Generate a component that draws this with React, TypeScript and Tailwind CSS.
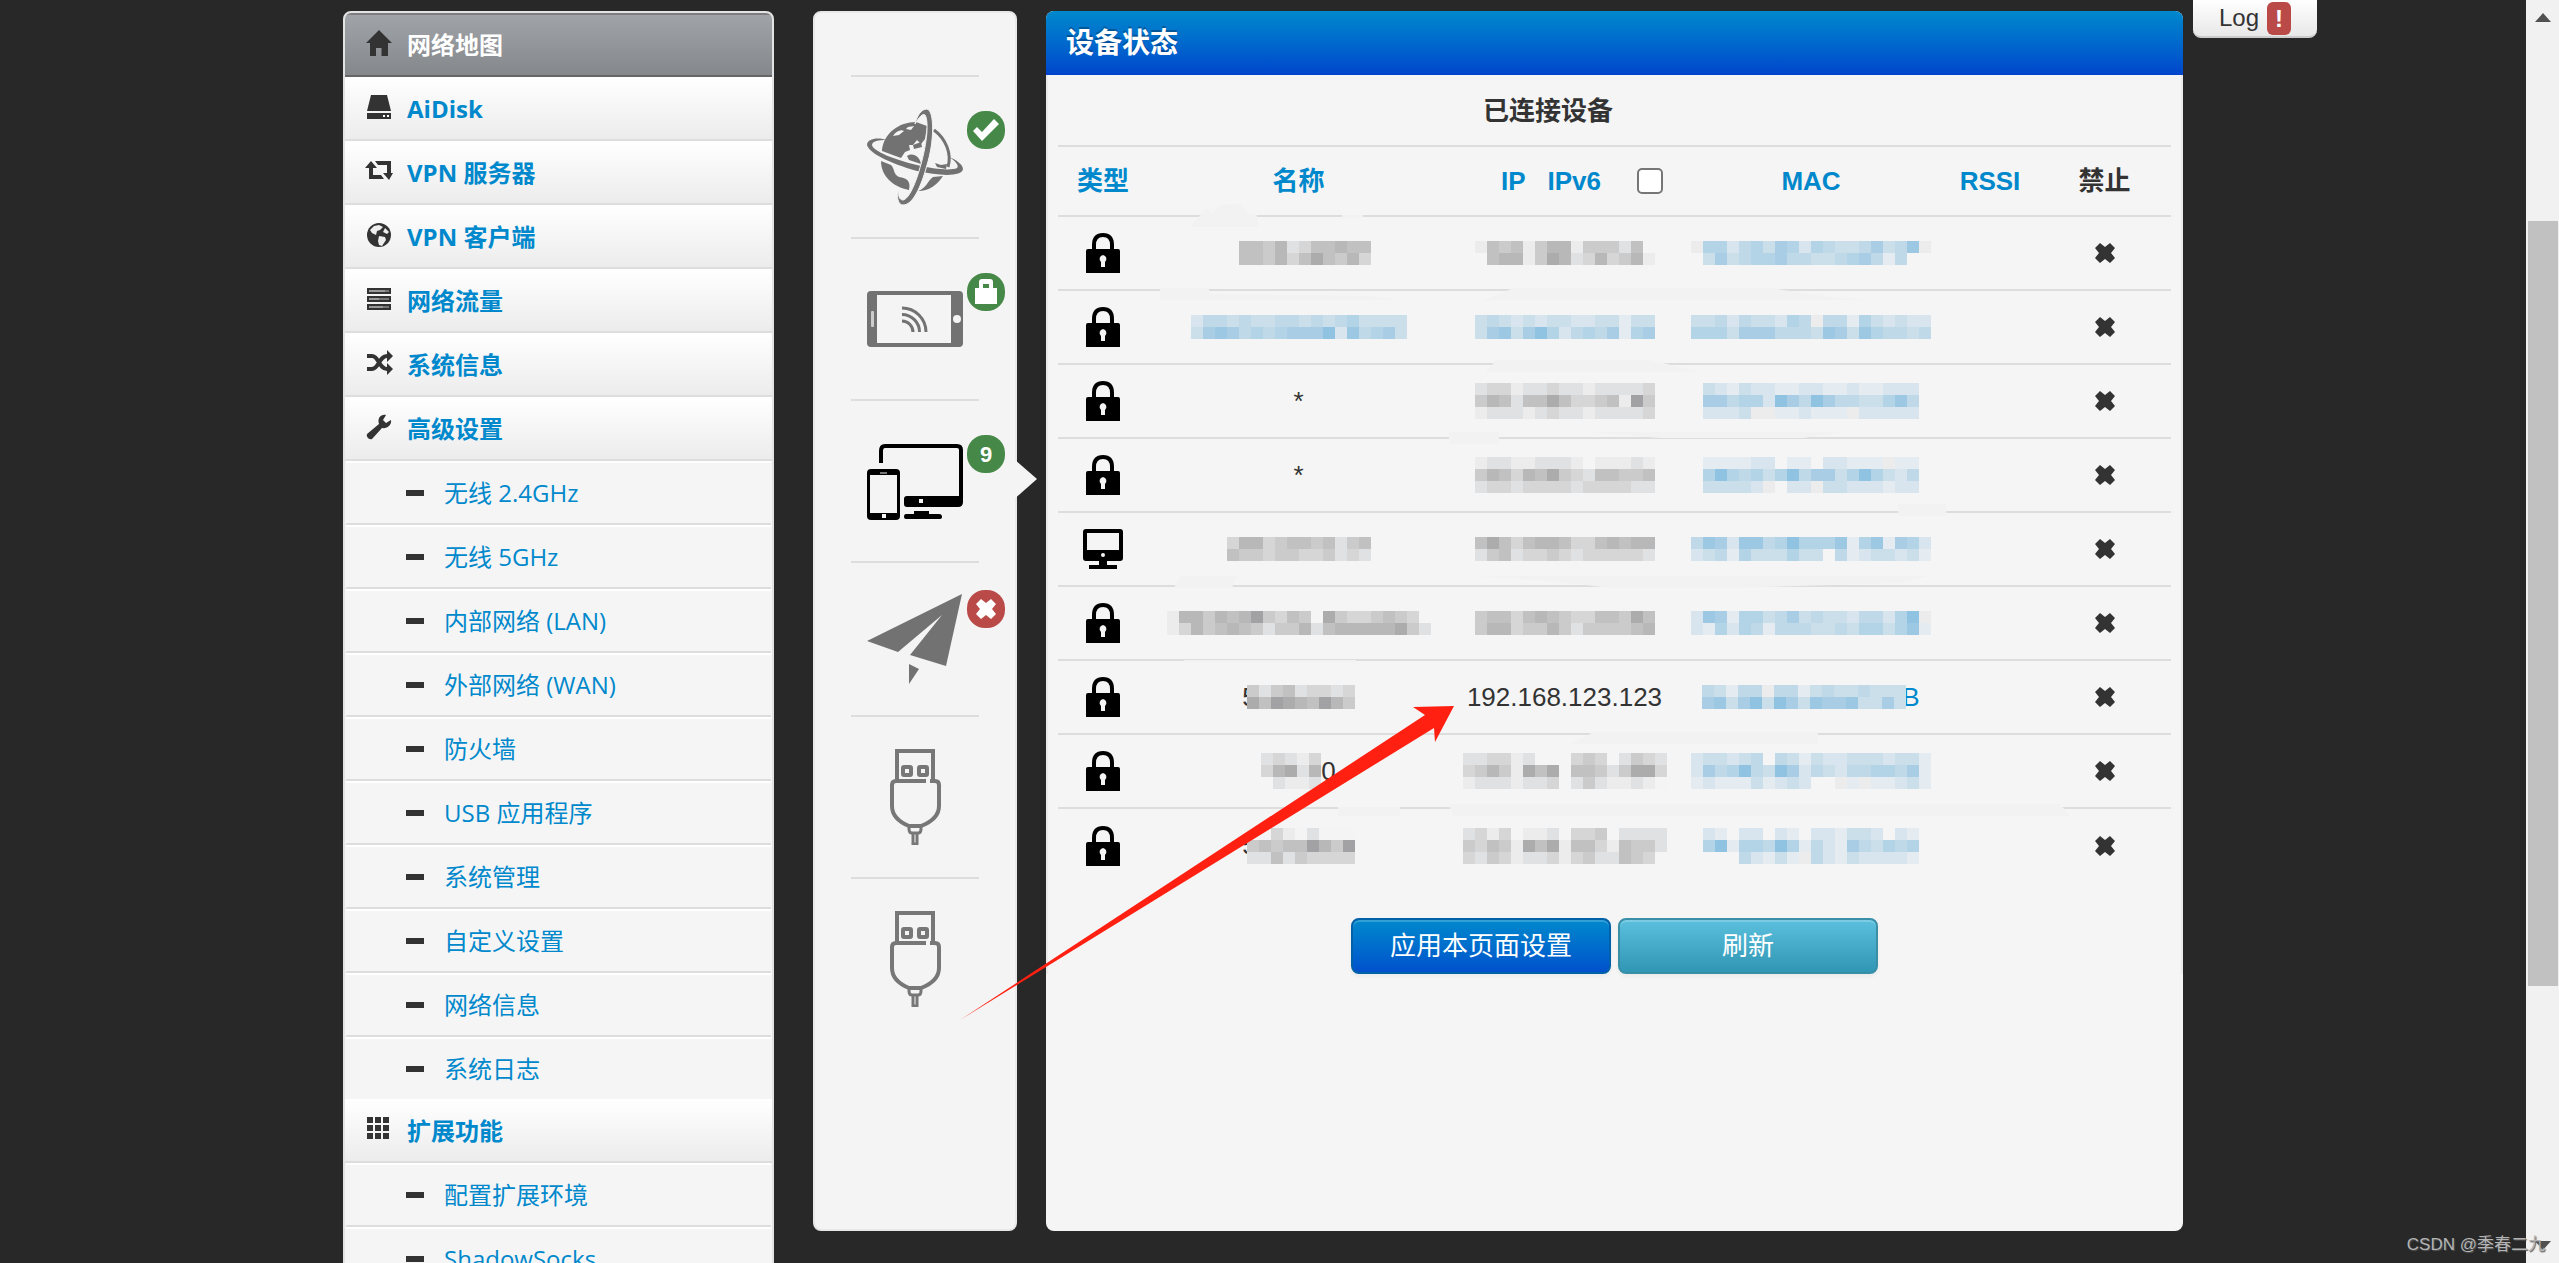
import type { ReactNode } from 'react';

type IconName =
  | 'home' | 'disk' | 'retweet' | 'globe' | 'tasks' | 'random' | 'wrench' | 'grid';

interface MenuGroup {
  icon: IconName;
  label: string;
  active?: boolean;
  items?: string[];
}

const MENU: MenuGroup[] = [
  { icon: 'home', label: '网络地图', active: true },
  { icon: 'disk', label: 'AiDisk' },
  { icon: 'retweet', label: 'VPN 服务器' },
  { icon: 'globe', label: 'VPN 客户端' },
  { icon: 'tasks', label: '网络流量' },
  { icon: 'random', label: '系统信息' },
  {
    icon: 'wrench',
    label: '高级设置',
    items: [
      '无线 2.4GHz', '无线 5GHz', '内部网络 (LAN)', '外部网络 (WAN)', '防火墙',
      'USB 应用程序', '系统管理', '自定义设置', '网络信息', '系统日志',
    ],
  },
  { icon: 'grid', label: '扩展功能', items: ['配置扩展环境', 'ShadowSocks'] },
];

// Colour per mosaic block: digits are greys, letters are blues, '.' is empty
const SHADES: Record<string, string> = {
  '0': '#f4f4f4',
  '1': '#ececec', '2': '#e0e1e2', '3': '#d6d6d7', '4': '#cbcbcc',
  '5': '#c1c1c2', '6': '#b8b8b8', '7': '#adacac', '8': '#a2a2a4',
  a: '#e4ecf1', b: '#d8e5ee', c: '#cbdfeb', d: '#c0d9e9',
  e: '#b3d3e7', f: '#a8cde4', g: '#9cc8e3', h: '#90c2e1',
};

interface Device {
  type: 'lock' | 'pc';
  name: string[] | string;
  nameHead?: string;
  nameTail?: string;
  ip: string[] | string;
  mac: string[];
  macTail?: string;
}

const DEVICES: Device[] = [
  {
    type: 'lock',
    name: ['.55462355655', '.55463575463'],
    ip: ['15451466144425.', '.56614762363461'],
    mac: ['1eebdecfebedccdfcdg1', '.cfcdeefddccdefdad..'],
  },
  {
    type: 'lock',
    name: ['bddcdccddcdcdecccc', 'cfgfdedefffhbgdefc'],
    ip: ['cdcbcbccbbccacc', 'cfgcfhebdedfaef'],
    mac: ['ccdbdccbed1ddaecbcbb', 'eeecfffdddcgfcgeddcd'],
  },
  {
    type: 'lock',
    name: '*',
    ip: ['233122322122223', '465255753345184', '122212322122223'],
    mac: ['cbacbbaabbaabaabbb', 'ffdeebhfdhfddccegd', 'bbbc11aabaaa1bbbbb'],
  },
  {
    type: 'lock',
    name: '*',
    ip: ['122112221.11121', '465365743255445', '233233332333322'],
    mac: ['aaaabb.aa.bbaaa1aa', 'ehedecehdffcehecbd', 'ccccb1.bb1ccbbbabb'],
  },
  {
    type: 'pc',
    name: ['366345545245', '544344334232'],
    ip: ['575356653356566', '245233432333332'],
    mac: ['dgfbggdeheeegaegafeb', 'bcdaecccecc.dabccbca'],
  },
  {
    type: 'lock',
    name: ['166465684354.74334543.', '1364565424462566666742'],
    ip: ['455356543355475', '466344642444456'],
    mac: ['bgfaeecdfcdccbddbeh1', 'baebedadddccdceecega'],
  },
  {
    type: 'lock',
    nameHead: '5',
    name: ['424523323', '758765864'],
    ip: '192.168.123.123',
    mac: ['dcadd1ddacdccdccc', 'fgcfhchfcgffgccfc'],
    macTail: 'B',
  },
  {
    type: 'lock',
    name: ['23213', '36726', '.2112'],
    nameTail: '0',
    ip: ['223312...343.2432', '34641757.55424773', '12221223.24211210'],
    mac: ['bccbcd.dcacbbcccbcca', 'bfdehdchfbdcbddeedfa', 'abaaacabcb..1a1aabca'],
  },
  {
    type: 'lock',
    nameHead: '5',
    name: ['003102000', '454558648', '225243333'],
    ip: ['2313.112.334.2222', '43541757155315442', '3243122313422543.'],
    mac: ['ba.bb.ba.bbaccb.ba', 'ehaeedheadbafdcede', '...dbaca1dbacbbbba'],
  },
];

function MenuIcon({ name }: { name: IconName }) {
  const shapes: Record<IconName, ReactNode> = {
    home: <path d="M14 1 L27 14 H23 V27 H16.500 V19 H11 V27 H5 V14 H1 Z" />,
    disk: (
      <>
        <path d="M6 2 H22 L26 18 H2 Z" />
        <path d="M2 20 H26 V26 H2 Z" />
        <path d="M18 22 h2 v2 h-2z M22 22 h2 v2 h-2z" fill="#fff" />
      </>
    ),
    retweet: (
      <>
        <path d="M6 4 L12 11 H8 V18 H16 L19 22 H4 V11 H0 Z" />
        <path d="M10 4 H26 V16 H28 L24 23 L18 16 H22 V8 H13 Z" />
      </>
    ),
    globe: (
      <>
        <circle cx="14" cy="14" r="12" />
        <path d="M9 5 L14 4 L18 6 L15 9 L12 10 L11 14 L7 12 L5 9 Z M14 15 L20 16 L21 19 L17 25 L14 24 L13 20 Z M20 7 L24 11 L22 13 L18 11 Z" fill="#eee" />
      </>
    ),
    tasks: (
      <>
        <path d="M2 3 H26 V9 H2 Z M2 11 H26 V17 H2 Z M2 19 H26 V25 H2 Z" />
        <path d="M4 5 H20 V7 H4 Z M4 13 H14 V15 H4 Z M4 21 H18 V23 H4 Z" fill="#999" />
        <path d="M20 5 H24 V7 H20 Z M14 13 H24 V15 H14 Z M18 21 H24 V23 H18 Z" fill="#777" />
      </>
    ),
    random: (
      <>
        <path d="M2 7 H7 C14 7 14 20 22 20 H23 M2 20 H7 C14 20 14 7 22 7 H23" fill="none" stroke="#333" strokeWidth="4" />
        <path d="M22 1 L28 7 L22 13 Z M22 14 L28 20 L22 26 Z" />
      </>
    ),
    wrench: (
      <path d="M26 7 L21 10 L18 7 L21 2 C16 1 12 5 14 11 L2 21 C1 24 4 27 7 26 L17 15 C22 16 27 12 26 7 Z" />
    ),
    grid: (
      <path d="M2 2h6v6h-6z M10 2h6v6h-6z M18 2h6v6h-6z M2 10h6v6h-6z M10 10h6v6h-6z M18 10h6v6h-6z M2 18h6v6h-6z M10 18h6v6h-6z M18 18h6v6h-6z" />
    ),
  };
  return (
    <svg viewBox="0 0 28 28" className="mb-1 h-7 w-7 shrink-0 fill-[#333]" aria-hidden="true">
      {shapes[name]}
    </svg>
  );
}

function Sidebar() {
  return (
    <nav className="w-[431px] shrink-0 self-start overflow-hidden rounded-lg border-2 border-[#e3e3e3] bg-[#f5f5f5] font-['Open_Sans','Noto_Sans_CJK_SC',sans-serif] text-2xl text-[#08c]">
      {MENU.map(group => (
        <div key={group.label}>
          <a
            href="#"
            className={
              group.active
                ? 'flex h-16 items-center gap-[14px] border-y-2 border-t-[#7d7d7d] border-b-[#666] bg-linear-to-b from-[#a0a3a8] to-[#85888b] pl-5 font-bold text-white'
                : 'flex h-16 items-center gap-[14px] border-b-2 border-[#ddd] bg-linear-to-b from-white to-[#ececec] pt-[2px] pl-5 font-bold'
            }
          >
            <MenuIcon name={group.icon} />
            <span>{group.label}</span>
          </a>
          {group.items && (
            <ul className="px-px">
              {group.items.map(item => (
                <li key={item} className="group/item">
                  <a
                    href="#"
                    className="flex h-16 items-center gap-5 border-t-2 border-b-2 border-t-white border-b-[#ddd] pl-[60px] group-last/item:h-[62px] group-last/item:border-b-0"
                  >
                    <span className="h-[6px] w-[18px] bg-[#333]" />
                    <span>{item}</span>
                  </a>
                </li>
              ))}
            </ul>
          )}
        </div>
      ))}
    </nav>
  );
}

function InternetIcon() {
  return (
    <svg viewBox="0 0 96 96" className="h-24 w-24 fill-[#727272]" aria-hidden="true">
      <path d="M15 41 C17 24 32 13 49 13 L60 17 L58 30 L54 35 L50 31 L46 36 L42 36 L43 41 L38 43 L34 49 L15 42 Z" />
      <path d="M26 27 C29 22 34 20 37 22 L32 26 Z M41 18 L47 17 L44 21 L39 20 Z" fill="#f4f4f4" />
      <path d="M14 52 L24 56 C28 60 26 65 32 68 C40 69 44 72 42 81 C26 78 14 67 14 52 Z" />
      <path d="M40 47 C46 43 53 48 54 55 L42 51 Z M46 36 l8 -3 l1 5 l-8 2 z M68 54 l6 2 l6 -1 l-1 5 l-9 -2 z" />
      <path d="M67 21 C79 30 85 45 81 58" fill="none" stroke="#727272" strokeWidth="3" />
      <path d="M76 67 C70 76 62 82 51 82 C60 79 60 72 66 68 Z" />
      <path d="M1 37 C6 47 24 56 50 61 C72 66 92 66 95 60" fill="none" stroke="#f4f4f4" strokeWidth="3" />
      <path d="M0 36 C2 44 22 54 50 62 C72 67 95 68 96 60 C96 56 90 51 82 48 C90 53 92 57 90 59 C84 62 66 60 50 56 C28 51 6 42 5 36 C5 32 12 31 19 31 C10 28 0 30 0 36 Z" />
      <path
        d="M60 0 C54 0 50 7 48 15 C52 8 56 4 58 6 C62 12 60 34 54 55 C49 74 42 90 36 91 C32 91 31 86 32 79 C29 88 31 96 36 96 C46 96 54 78 60 56 C67 34 68 2 60 0 Z"
        stroke="#f4f4f4"
        strokeWidth="1"
      />
    </svg>
  );
}

function WirelessIcon() {
  return (
    <svg viewBox="0 0 96 96" className="h-24 w-24" aria-hidden="true">
      <rect y="20" width="96" height="56" rx="4" fill="#727272" />
      <rect x="10" y="24" width="74" height="48" fill="#f4f4f4" />
      <rect x="4" y="40" width="3" height="16" rx="1" fill="#ccc" />
      <circle cx="90" cy="48" r="4" fill="#f4f4f4" />
      <g fill="none" stroke="#727272" strokeWidth="3">
        <path d="M35 50 A11 11 0 0 1 46 61" />
        <path d="M35 43.500 A17.500 17.500 0 0 1 52.500 61" />
        <path d="M35 37 A24 24 0 0 1 59 61" />
      </g>
    </svg>
  );
}

function ClientsIcon() {
  return (
    <svg viewBox="0 0 96 96" className="h-24 w-24" aria-hidden="true">
      <path d="M14 30 V18 Q14 13 18 13 H90 Q94 13 94 17 V66" fill="none" stroke="#000" strokeWidth="4" />
      <path d="M37 66 Q37 63 40 63 H96 V69 Q96 74 91 74 H40 Q37 74 37 71 Z" />
      <rect x="52" y="66" width="4" height="4" fill="#f4f4f4" />
      <path d="M47 78 H62 V81 H72 Q75 81 75 84 Q75 86 72 86 H39 Q37 86 37 84 Q37 81 39 81 H47 Z" />
      <rect y="36" width="33" height="51" rx="4" />
      <rect x="3" y="42" width="27" height="38" fill="#f4f4f4" />
      <rect x="13" y="39" width="7" height="2" fill="#777" />
      <rect x="15" y="81" width="4" height="4" fill="#f4f4f4" />
    </svg>
  );
}

function PlaneIcon() {
  return (
    <svg viewBox="0 0 96 90" className="h-[90px] w-24 fill-[#727272]" aria-hidden="true">
      <path d="M95 0 L0 47 L31 58 L75 21 L43 61 L79 72 Z" />
      <path d="M42 70 L52 75 L42 90 Z" />
    </svg>
  );
}

function UsbIcon() {
  return (
    <svg viewBox="0 0 96 96" className="h-24 w-24" fill="none" stroke="#777" strokeWidth="4" aria-hidden="true">
      <path d="M30 32 V2 H66 V32" />
      <rect x="36" y="18" width="8" height="8" rx="1" />
      <rect x="52" y="18" width="8" height="8" rx="1" />
      <path d="M59 32 H29 Q25 32 25 36 V57 Q25 70 42 77 H54 Q72 70 72 57 V36 Q72 32 68 32 H63" />
      <path d="M42 77 V80 Q42 84 45 84 H51 Q54 84 54 80 V77" strokeWidth="3" />
      <path d="M46 84 V95 H50 V84" strokeWidth="3" />
    </svg>
  );
}

function Badge({ tone, children }: { tone: 'ok' | 'bad'; children: ReactNode }) {
  return (
    <span
      className={
        tone === 'ok'
          ? 'absolute bottom-14 left-[100px] flex h-[38px] w-[38px] items-center justify-center rounded-[18px] bg-[#468847] text-[22px] font-bold text-white'
          : 'absolute bottom-14 left-[100px] flex h-[38px] w-[38px] items-center justify-center rounded-[18px] bg-[#b94a48] text-[22px] font-bold text-white'
      }
    >
      {children}
    </span>
  );
}

function CrossShape({ className }: { className: string }) {
  return (
    <svg viewBox="0 0 20 20" className={className} aria-hidden="true">
      <path d="M5 0 L10 4 L15 0 L20 5 L16 10 L20 15 L15 20 L10 16 L5 20 L0 15 L4 10 L0 5 Z" />
    </svg>
  );
}

function StatusStrip() {
  return (
    <aside className="flex w-[204px] shrink-0 flex-col items-center rounded-lg border-2 border-[#e8e8e8] bg-[#f4f4f4] pt-[62px]">
      <a href="#" className="flex h-[162px] w-32 items-center justify-center border-t-2 border-[#ddd]">
        <span className="relative">
          <InternetIcon />
          <Badge tone="ok">
            <svg viewBox="0 0 26 22" className="h-[22px] w-[26px] fill-white" aria-hidden="true">
              <path d="M0 12 L4 8 L9 13 L21 0 L26 5 L9 22 Z" />
            </svg>
          </Badge>
        </span>
      </a>
      <a href="#" className="flex h-[162px] w-32 items-center justify-center border-t-2 border-[#ddd]">
        <span className="relative">
          <WirelessIcon />
          <Badge tone="ok">
            <svg viewBox="0 0 22 26" className="h-[26px] w-[22px] fill-white" aria-hidden="true">
              <path fillRule="evenodd" d="M0 9 H4 V3 Q4 0 7 0 H15 Q18 0 18 3 V9 H22 V25 H0 Z M8 5 V9 H14 V5 Z" />
            </svg>
          </Badge>
        </span>
      </a>
      <a href="#" className="relative flex h-[162px] w-32 items-center justify-center border-t-2 border-[#ddd]">
        <span className="relative">
          <ClientsIcon />
          <Badge tone="ok">9</Badge>
        </span>
        <svg viewBox="0 0 32 56" className="absolute top-[50px] left-[154px] h-14 w-8 fill-[#f4f4f4]" aria-hidden="true">
          <path d="M0 0 L32 28 L0 56 Z" />
        </svg>
      </a>
      <a href="#" className="flex h-[154px] w-32 items-center justify-center border-t-2 border-[#ddd]">
        <span className="relative">
          <PlaneIcon />
          <Badge tone="bad">
            <CrossShape className="h-5 w-5 fill-white" />
          </Badge>
        </span>
      </a>
      <a href="#" className="flex h-[162px] w-32 items-center justify-center border-t-2 border-[#ddd]">
        <UsbIcon />
      </a>
      <a href="#" className="flex h-[162px] w-32 items-center justify-center border-t-2 border-[#ddd]">
        <UsbIcon />
      </a>
    </aside>
  );
}

function Mosaic({ rows }: { rows: string[] }) {
  const w = rows[0].length * 12;
  const h = rows.length * 12;
  return (
    <svg width={w} height={h} shapeRendering="crispEdges" className="relative shrink-0" aria-hidden="true">
      {rows.map((row, y) =>
        row.split('').map((c, x) =>
          SHADES[c] ? (
            <rect key={`${x}-${y}`} x={x * 12} y={y * 12} width="12" height="12" fill={SHADES[c]} />
          ) : null
        )
      )}
    </svg>
  );
}

function DeviceIcon({ type }: { type: Device['type'] }) {
  if (type === 'pc') {
    return (
      <svg viewBox="0 0 40 40" className="mx-auto h-10 w-10" aria-label="PC">
        <path fillRule="evenodd" d="M3 0 H37 Q40 0 40 3 V29 Q40 32 37 32 H24 V36 H34 V40 H6 V36 H16 V32 H3 Q0 32 0 29 V3 Q0 0 3 0 Z M4 4 V21 H36 V4 Z" />
        <circle cx="20" cy="26" r="2" fill="#f4f4f4" />
      </svg>
    );
  }
  return (
    <svg viewBox="0 0 34 40" className="mx-auto h-10 w-[34px]" aria-label="Lock">
      <path d="M8 18 V12 Q8 2 17 2 Q26 2 26 12 V18" fill="none" stroke="#000" strokeWidth="4" />
      <path d="M2 16 H32 Q34 16 34 18 V40 H0 V18 Q0 16 2 16 Z" />
      <path d="M17 22 a4 4 0 0 1 2 7 V34 H15 V29 a4 4 0 0 1 2 -7 Z" fill="#f4f4f4" />
    </svg>
  );
}

function DeviceRow({ device }: { device: Device }) {
  return (
    <tr className="h-[74px] border-t-2 border-[#ddd]">
      <td><DeviceIcon type={device.type} /></td>
      <td>
        <div className="flex items-center justify-center">
          {device.nameHead && <span className="-mr-[10px]">{device.nameHead}</span>}
          {typeof device.name === 'string' ? device.name : <Mosaic rows={device.name} />}
          {device.nameTail}
        </div>
      </td>
      <td>
        <div className="flex items-center justify-center">
          {typeof device.ip === 'string' ? device.ip : <Mosaic rows={device.ip} />}
        </div>
      </td>
      <td>
        <a href="#" className="flex items-center justify-center text-[#08c]">
          <Mosaic rows={device.mac} />
          {device.macTail && <span className="-ml-[4px]">{device.macTail}</span>}
        </a>
      </td>
      <td />
      <td>
        <button type="button" className="mx-auto block" aria-label="禁止">
          <CrossShape className="h-5 w-5 fill-[#333]" />
        </button>
      </td>
    </tr>
  );
}

function DevicePanel() {
  return (
    <main className="min-w-0 flex-1 overflow-hidden rounded-lg bg-[#f5f5f5]">
      <h2 className="flex h-16 items-center bg-linear-to-b from-[#08c] to-[#04c] pt-[2px] pl-5 text-[28px] font-bold text-white [text-shadow:0_-2px_0_rgba(0,0,0,0.25)]">
        设备状态
      </h2>
      <div className="border-x-2 border-[#ebebeb] px-[10px]">
        <table className="w-full table-fixed border-collapse text-center text-[26px] text-[#333]">
          <colgroup>
            <col className="w-[90px]" />
            <col className="w-[301px]" />
            <col className="w-[231px]" />
            <col className="w-[262px]" />
            <col className="w-[96px]" />
            <col />
          </colgroup>
          <thead>
            <tr className="h-[71px]">
              <th colSpan={5} className="pt-[2px]">已连接设备</th>
              <th />
            </tr>
            <tr className="h-[70px] border-t-2 border-[#ddd] text-[#08c]">
              <th><a href="#">类型</a></th>
              <th><a href="#">名称</a></th>
              <th>
                <div className="flex items-center justify-end pr-[17px]">
                  <a href="#">IP</a>
                  <label htmlFor="ipv6" className="ml-[22px]">IPv6</label>
                  <input
                    id="ipv6"
                    type="checkbox"
                    className="ml-9 h-[26px] w-[26px] appearance-none rounded-[5px] border-2 border-[#767676] bg-white"
                  />
                </div>
              </th>
              <th><a href="#">MAC</a></th>
              <th><a href="#">RSSI</a></th>
              <th className="text-[#333]">禁止</th>
            </tr>
          </thead>
          <tbody>
            {DEVICES.map((device, i) => (
              <DeviceRow key={i} device={device} />
            ))}
          </tbody>
        </table>
        <div className="mt-9 flex justify-center gap-[7px] text-[26px] text-white [text-shadow:0_-2px_0_rgba(0,0,0,0.25)]">
          <button
            type="button"
            className="h-14 w-[260px] rounded-lg border-2 border-[#0060a8] bg-linear-to-b from-[#08c] to-[#0050cc] shadow-[inset_0_2px_0_rgba(255,255,255,0.2),0_2px_4px_rgba(0,0,0,0.05)]"
          >
            应用本页面设置
          </button>
          <button
            type="button"
            className="h-14 w-[260px] rounded-lg border-2 border-[#3a8fa8] bg-linear-to-b from-[#5bc0de] to-[#2f96b4] shadow-[inset_0_2px_0_rgba(255,255,255,0.2),0_2px_4px_rgba(0,0,0,0.05)]"
          >
            刷新
          </button>
        </div>
      </div>
    </main>
  );
}

// Red pointer and the smudges left by the redaction brush, drawn over the panels
function Annotations() {
  return (
    <svg
      viewBox="343 0 1840 1263"
      className="pointer-events-none absolute top-0 left-0 h-[1263px] w-[1840px]"
      aria-hidden="true"
    >
      <g fill="#f2f2f2">
        <path d="M1190 227 L1206 209 L1212 213 L1221 205 L1240 204 L1250 214 L1256 213 L1259 227 Z" />
        <path d="M1342 215 h21 v3 h-21 z" />
        <path d="M1160 288 H1209 V294 L1370 296 L1395 300 H1160 Z" />
        <path d="M1483 300 L1514 288 H1770 L1830 297 L1870 300 Z" />
        <path d="M1485 372 L1497 360 H1650 L1700 372 Z" />
        <path d="M1448 432 H1499 V444 H1450 Z M1590 432 H1840 L1804 438 H1660 Z" />
        <path d="M1898 504 H1946 V516 H1898 Z" />
        <path d="M1174 588 L1180 576 H1237 L1232 588 Z" />
        <path d="M1478 576 H1928 L1900 583 L1730 588 H1612 L1550 581 Z" />
        <path d="M1184 660 H1356 V662 H1184 Z" />
        <path d="M1570 744 L1594 732 H1818 V744 Z" />
        <path d="M1338 807 H1400 V816 H1338 Z M1448 804 H2060 L2070 816 H1454 Z" />
      </g>
      <path d="M960 1020 L1425 715 L1413 707 L1454 706 L1435 742 L1434 728 Z" fill="#ff2012" />
    </svg>
  );
}

function ScrollTrack() {
  return (
    <div className="flex w-[33px] shrink-0 flex-col items-center bg-[#f1f1f1] py-[13px]" aria-hidden="true">
      <svg viewBox="0 0 16 9" className="h-[9px] w-4 fill-[#505050]"><path d="M8 0 L16 9 H0 Z" /></svg>
      <div className="mt-[199px] h-[765px] w-[30px] bg-[#c1c1c1]" />
      <svg viewBox="0 0 16 9" className="mt-auto h-[9px] w-4 fill-[#505050]"><path d="M0 0 H16 L8 9 Z" /></svg>
    </div>
  );
}

export default function App() {
  return (
    <div className="relative flex h-screen overflow-hidden bg-[#282828] font-['Liberation_Sans','Noto_Sans_CJK_SC',sans-serif]">
      <div className="min-w-0 flex-1">
        <div className="relative mx-auto flex max-w-[1840px] items-start pt-[11px]">
          <Sidebar />
          <div className="ml-[39px] flex min-h-[1220px] min-w-0 flex-1 gap-[29px]">
            <StatusStrip />
            <DevicePanel />
          </div>
          <Annotations />
          <a
            href="#"
            className="absolute top-0 left-full ml-[10px] flex h-[38px] w-[124px] items-start justify-center gap-2 rounded-b-lg border-b-2 border-[#ccc] bg-linear-to-b from-white to-[#e8e8e8] pt-[2px] text-2xl text-[#333]"
          >
            <span className="leading-8">Log</span>
            <span className="flex h-[33px] w-6 items-center justify-center rounded-md bg-[#b94a48] font-bold text-white">!</span>
          </a>
        </div>
      </div>
      <ScrollTrack />
      <div className="absolute right-[14px] bottom-[6px] text-[17px] text-[#b4b4b4] [text-shadow:1px_1px_1px_#555]">
        CSDN @季春二九
      </div>
    </div>
  );
}
